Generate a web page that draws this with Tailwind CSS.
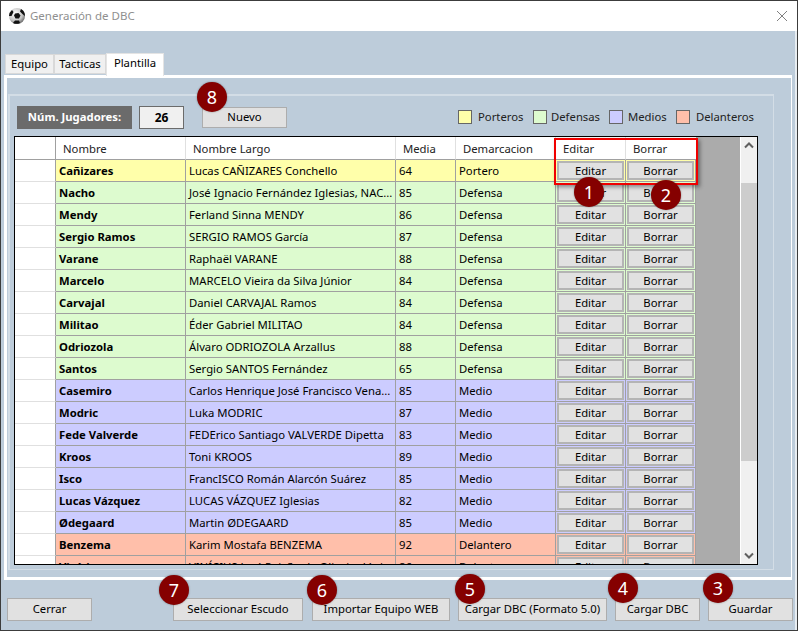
<!DOCTYPE html>
<html lang="es">

<head>
    <meta charset="UTF-8" />
    <title>Generación de DBC</title>
    <script src="https://cdn.jsdelivr.net/npm/@tailwindcss/browser@4"></script>
</head>

<body class="bg-[#bdccda] text-black text-[11.3px] font-['Noto_Sans','DejaVu_Sans',sans-serif] overflow-hidden">
    <div class="relative w-[798px] h-[631px] border border-[#3c3c3c] shadow-[inset_-2px_0_0_#e8edf1] flex flex-col overflow-hidden">

        <!-- Title bar -->
        <div class="h-[30px] shrink-0 bg-white flex items-center pl-[8px] pr-[10px] text-[#8f8f8f]">
            <svg width="16" height="16" viewBox="0 0 16 16">
                <defs>
                    <radialGradient id="ball" cx="0.4" cy="0.35" r="0.75">
                        <stop offset="0" stop-color="#ffffff" />
                        <stop offset="0.6" stop-color="#c4c4c4" />
                        <stop offset="1" stop-color="#4a4a4a" />
                    </radialGradient>
                </defs>
                <circle cx="8" cy="8" r="8" fill="url(#ball)" />
                <path d="M6 5.500l3.500-.5 2 2.500-1.500 3-3.500 0-1.500-3z" fill="#111" />
                <path d="M0 8a8 8 0 0 1 3-6l1.500 2-2 4zM16 8a8 8 0 0 0-4-7l-1 2.500 3 3zM4 15l2-2.500 4 0 1 2.500a8 8 0 0 1-7 0z" fill="#111" />
            </svg>
            <span class="ml-[5px] text-[11.5px]">Generación de DBC</span>
            <svg class="ml-auto" width="10" height="10" viewBox="0 0 10 10">
                <path d="M0 0l10 10M10 0L0 10" stroke="#808080" fill="none" />
            </svg>
        </div>

        <!-- Tabs -->
        <div class="h-[44px] shrink-0 flex items-end pl-[4px] relative z-10">
            <div class="w-[49px] h-[20px] mb-px bg-[#f0f0f0] border border-[#d9d9d9] flex items-center justify-center">Equipo</div>
            <div class="w-[52px] h-[20px] mb-px bg-[#f0f0f0] border border-[#d9d9d9] flex items-center justify-center">Tacticas</div>
            <div class="w-[58px] h-[23px] mb-[-1px] bg-white border border-b-0 border-[#e4e4e4] flex items-center justify-center pb-[3px]">Plantilla</div>
        </div>

        <!-- Tab page -->
        <div class="ml-[3px] mr-[5px] h-[505px] shrink-0 border-[3px] border-white border-r bg-[#bdccda] pt-[16px] pl-px pr-[17px] pb-[7px]">
            <div class="h-full border-2 border-r border-b border-[#d3dde6] pt-[10px] pl-[4px] flex flex-col">

                <!-- Counter row -->
                <div class="h-[30px] shrink-0 pl-[3px] flex items-start">
                    <div class="w-[115px] h-[23px] bg-[#6b6b6b] text-white font-bold flex items-center justify-center">Núm. Jugadores:</div>
                    <div class="w-[45px] h-[23px] ml-[7px] bg-[#f0f0f0] border border-[#6b6b6b] font-bold text-[12px] flex items-center justify-center">26</div>
                    <button class="w-[85px] h-[21px] mt-px ml-[18px] bg-[#e1e1e1] border border-[#adadad]">Nuevo</button>
                    <div class="ml-[171px] mt-[3px] flex items-center text-[#222]">
                        <span class="w-[14px] h-[14px] bg-[#ffffaa] border border-[#666] mr-[6px]"></span><span class="w-[55px]">Porteros</span>
                        <span class="w-[14px] h-[14px] bg-[#ddfbcf] border border-[#666] mr-[4px]"></span><span class="w-[58px]">Defensas</span>
                        <span class="w-[14px] h-[14px] bg-[#ccccff] border border-[#666] mr-[5px]"></span><span class="w-[48px]">Medios</span>
                        <span class="w-[14px] h-[14px] bg-[#ffbfaa] border border-[#666] mr-[6px]"></span><span>Delanteros</span>
                    </div>
                </div>

                <!-- Grid -->
                <div class="w-[744px] h-[429px] shrink-0 border border-black bg-[#ababab] flex overflow-hidden">
                    <div class="w-[725px] overflow-hidden">
                        <div class="flex w-[681px] h-[23px] bg-white text-[#222]">
                            <div class="w-[41px] border-r border-b border-[#a0a0a0]"></div>
                            <div class="w-[130px] pl-[7px] leading-[23px] border-r border-b border-[#e0e0e0] border-b-[#a0a0a0]">Nombre</div>
                            <div class="w-[210px] pl-[7px] leading-[23px] border-r border-b border-[#e0e0e0] border-b-[#a0a0a0]">Nombre Largo</div>
                            <div class="w-[60px] pl-[7px] leading-[23px] border-r border-b border-[#e0e0e0] border-b-[#a0a0a0]">Media</div>
                            <div class="w-[100px] pl-[7px] leading-[23px] border-r border-b border-[#e0e0e0] border-b-[#a0a0a0]">Demarcacion</div>
                            <div class="w-[70px] pl-[7px] leading-[23px] border-r border-b border-[#e0e0e0] border-b-[#a0a0a0]">Editar</div>
                            <div class="w-[70px] pl-[7px] leading-[23px] border-b border-[#a0a0a0]">Borrar</div>
                        </div>
                        <div id="rows"></div>
                    </div>
                    <!-- Scrollbar -->
                    <div class="w-[17px] bg-[#f0f0f0] border-l border-white flex flex-col items-center">
                        <svg class="mt-[5px]" width="10" height="7" viewBox="0 0 10 7"><path d="M1 5.500l4-4 4 4" stroke="#606060" stroke-width="2" fill="none" /></svg>
                        <div class="w-full h-[278px] mt-[34px] bg-[#cdcdcd]"></div>
                        <svg class="mt-auto mb-[5px]" width="10" height="7" viewBox="0 0 10 7"><path d="M1 1.500l4 4 4-4" stroke="#606060" stroke-width="2" fill="none" /></svg>
                    </div>
                </div>
            </div>
        </div>

        <!-- Bottom buttons -->
        <div class="flex mt-[18px] pl-[6px]">
            <button class="w-[85px] h-[23px] bg-[#e1e1e1] border border-[#adadad]">Cerrar</button>
            <button class="w-[130px] h-[23px] ml-[81px] bg-[#e1e1e1] border border-[#adadad]">Seleccionar Escudo</button>
            <button class="w-[138px] h-[23px] ml-[9px] bg-[#e1e1e1] border border-[#adadad]">Importar Equipo WEB</button>
            <button class="w-[149px] h-[23px] ml-[8px] bg-[#e1e1e1] border border-[#adadad]">Cargar DBC (Formato 5.0)</button>
            <button class="w-[85px] h-[23px] ml-[8px] bg-[#e1e1e1] border border-[#adadad]">Cargar DBC</button>
            <button class="w-[85px] h-[23px] ml-[8px] bg-[#e1e1e1] border border-[#adadad]">Guardar</button>
        </div>

        <!-- Red highlight over the grid -->
        <div class="absolute left-[553px] top-[137px] w-[144px] h-[47px] border-[2px] border-[#f00000] shadow-[2px_2px_4px_rgba(0,0,0,0.4)]"></div>

        <!-- Numbered badges -->
        <span class="absolute left-[573px] top-[176px] w-[30px] h-[30px] rounded-full bg-[#850000] text-white text-[18px] flex items-center justify-center shadow-[0_0_2px_rgba(0,0,0,0.4)]">1</span>
        <span class="absolute left-[650px] top-[179px] w-[30px] h-[30px] rounded-full bg-[#850000] text-white text-[18px] flex items-center justify-center shadow-[0_0_2px_rgba(0,0,0,0.4)]">2</span>
        <span class="absolute left-[702px] top-[572px] w-[30px] h-[30px] rounded-full bg-[#850000] text-white text-[18px] flex items-center justify-center shadow-[0_0_2px_rgba(0,0,0,0.4)]">3</span>
        <span class="absolute left-[607px] top-[572px] w-[30px] h-[30px] rounded-full bg-[#850000] text-white text-[18px] flex items-center justify-center shadow-[0_0_2px_rgba(0,0,0,0.4)]">4</span>
        <span class="absolute left-[454px] top-[573px] w-[30px] h-[30px] rounded-full bg-[#850000] text-white text-[18px] flex items-center justify-center shadow-[0_0_2px_rgba(0,0,0,0.4)]">5</span>
        <span class="absolute left-[306px] top-[574px] w-[30px] h-[30px] rounded-full bg-[#850000] text-white text-[18px] flex items-center justify-center shadow-[0_0_2px_rgba(0,0,0,0.4)]">6</span>
        <span class="absolute left-[158px] top-[574px] w-[30px] h-[30px] rounded-full bg-[#850000] text-white text-[18px] flex items-center justify-center shadow-[0_0_2px_rgba(0,0,0,0.4)]">7</span>
        <span class="absolute left-[196px] top-[81px] w-[30px] h-[30px] rounded-full bg-[#850000] text-white text-[18px] flex items-center justify-center shadow-[0_0_2px_rgba(0,0,0,0.4)]">8</span>
    </div>

    <script>
        const colors = {
            Portero: 'bg-[#ffffaa]',
            Defensa: 'bg-[#ddfbcf]',
            Medio: 'bg-[#ccccff]',
            Delantero: 'bg-[#ffbfaa]'
        };
        const players = [
            ['Cañizares', 'Lucas CAÑIZARES Conchello', 64, 'Portero'],
            ['Nacho', 'José Ignacio Fernández Iglesias, NAC...', 85, 'Defensa'],
            ['Mendy', 'Ferland Sinna MENDY', 86, 'Defensa'],
            ['Sergio Ramos', 'SERGIO RAMOS García', 87, 'Defensa'],
            ['Varane', 'Raphaël VARANE', 88, 'Defensa'],
            ['Marcelo', 'MARCELO Vieira da Silva Júnior', 84, 'Defensa'],
            ['Carvajal', 'Daniel CARVAJAL Ramos', 84, 'Defensa'],
            ['Militao', 'Éder Gabriel MILITAO', 84, 'Defensa'],
            ['Odriozola', 'Álvaro ODRIOZOLA Arzallus', 88, 'Defensa'],
            ['Santos', 'Sergio SANTOS Fernández', 65, 'Defensa'],
            ['Casemiro', 'Carlos Henrique José Francisco Vena...', 85, 'Medio'],
            ['Modric', 'Luka MODRIC', 87, 'Medio'],
            ['Fede Valverde', 'FEDErico Santiago VALVERDE Dipetta', 83, 'Medio'],
            ['Kroos', 'Toni KROOS', 89, 'Medio'],
            ['Isco', 'FrancISCO Román Alarcón Suárez', 85, 'Medio'],
            ['Lucas Vázquez', 'LUCAS VÁZQUEZ Iglesias', 82, 'Medio'],
            ['Ødegaard', 'Martin ØDEGAARD', 85, 'Medio'],
            ['Benzema', 'Karim Mostafa BENZEMA', 92, 'Delantero'],
            ['Vinícius', 'VINÍCIUS José Paixão de Oliveira Júnior', 86, 'Delantero']
        ];
        const cell = 'border-r border-b border-[#a0a0a0] pl-[3px] leading-[21px] whitespace-nowrap overflow-hidden';
        const btnCell = 'border-r border-b border-[#a0a0a0] p-px';
        const btn = 'w-full h-full pt-px bg-[#e1e1e1] border-2 border-[#b4b4b4] flex items-center justify-center';

        document.getElementById('rows').innerHTML = players.map(([name, full, avg, pos]) => `
            <div class="flex w-[681px] h-[22px] ${colors[pos]}">
                <div class="w-[41px] bg-white border-r border-b border-[#e0e0e0] border-r-[#a0a0a0]"></div>
                <div class="w-[130px] font-bold ${cell}">${name}</div>
                <div class="w-[210px] ${cell}">${full}</div>
                <div class="w-[60px] ${cell}">${avg}</div>
                <div class="w-[100px] ${cell}">${pos}</div>
                <div class="w-[70px] ${btnCell}"><div class="${btn}">Editar</div></div>
                <div class="w-[70px] ${btnCell}"><div class="${btn}">Borrar</div></div>
            </div>`).join('');
    </script>
</body>

</html>
